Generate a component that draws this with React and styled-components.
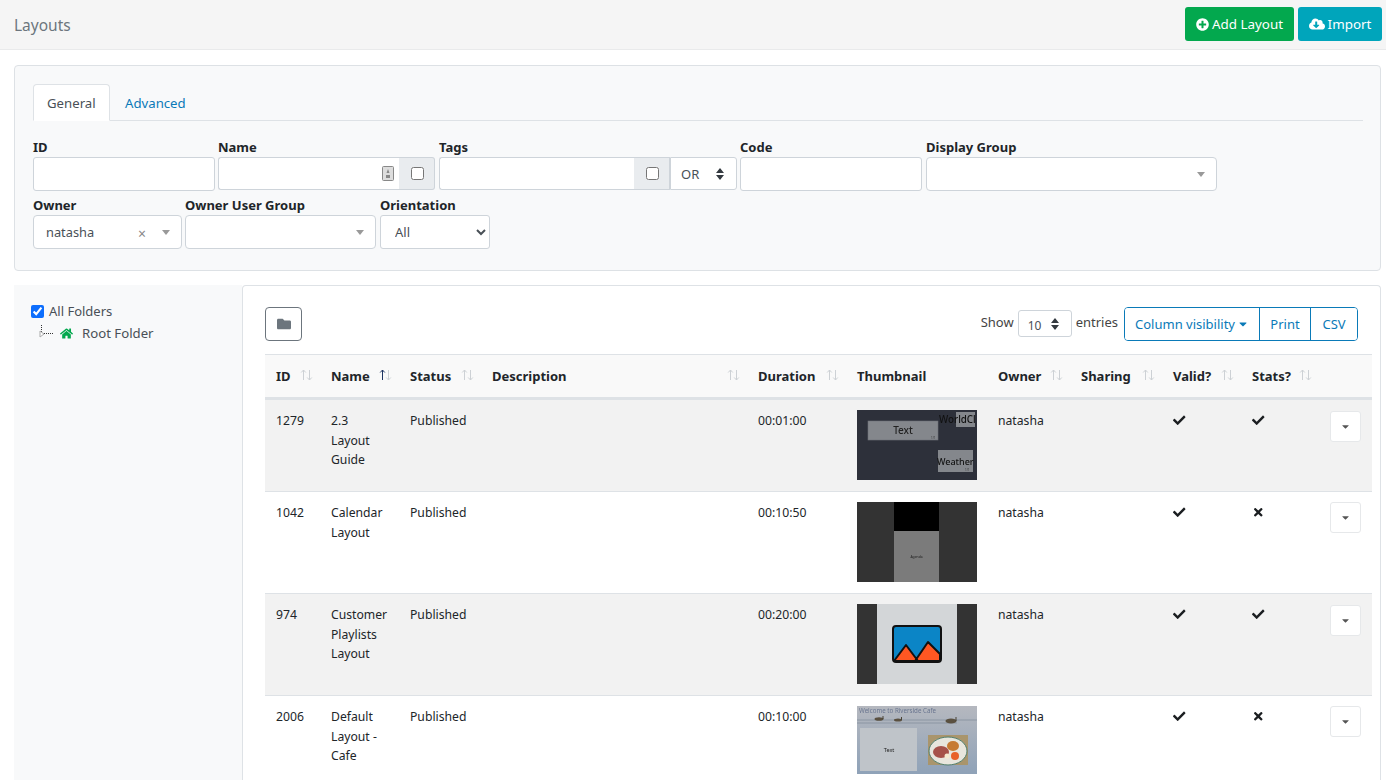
import React from "react";
import styled, { createGlobalStyle } from "styled-components";
import { FaPlusCircle, FaCloudDownloadAlt, FaFolder, FaHome, FaCheck, FaTimes, FaCaretDown } from "react-icons/fa";

const updown = "data:image/svg+xml,%3Csvg xmlns='http://www.w3.org/2000/svg' width='8' height='12' viewBox='0 0 8 12'%3E%3Cpath fill='%23343a40' d='M4 0 8 5H0zM4 12 0 7h8z'/%3E%3C/svg%3E";

const Global = createGlobalStyle`
	html, body {
		margin: 0;
		height: 780px;
		overflow: hidden;
		background: #fff;
		font-family: "Noto Sans", "Open Sans", sans-serif;
		font-size: 13px;
		color: #212529;
	}
	* { box-sizing: border-box; }
`;

const Header = styled.header`
	height: 50px;
	background: #f5f5f5;
	border-bottom: 1px solid #e9eaeb;
	display: flex;
	align-items: flex-start;
	justify-content: space-between;
	padding: 7px 4px 0 14px;
`;
const Title = styled.h1`
	margin: 7px 0 0;
	font-size: 15.5px;
	font-weight: 400;
	color: #6c757d;
	line-height: 22px;
`;
const HeaderActions = styled.div`
	display: flex;
	gap: 4px;
`;
const ActionButton = styled.button`
	height: 34px;
	width: ${(p) => p.$w}px;
	border: 0;
	border-radius: 3px;
	background: ${(p) => p.$color};
	color: #fff;
	font: inherit;
	font-size: 13.4px;
	display: flex;
	align-items: center;
	justify-content: center;
	gap: ${(p) => p.$gap}px;
	padding: 0;
	svg { font-size: ${(p) => p.$icon}px; }
`;

const FilterPanel = styled.section`
	margin: 15px 5px 0 14px;
	height: 206px;
	background: #f8f9fa;
	border: 1px solid #dde1e5;
	border-radius: 4px;
	padding: 18px 17px 0 18px;
`;
const Tabs = styled.nav`
	display: flex;
	height: 37px;
	border-bottom: 1px solid #dee2e6;
`;
const Tab = styled.a`
	height: 37px;
	padding: 0 ${(p) => p.$pad}px;
	width: ${(p) => p.$w}px;
	line-height: 36px;
	font-size: 13.2px;
	color: ${(p) => (p.$active ? "#495057" : "#0a7ab8")};
	background: ${(p) => (p.$active ? "#fff" : "transparent")};
	border: 1px solid ${(p) => (p.$active ? "#dee2e6" : "transparent")};
	border-bottom-color: ${(p) => (p.$active ? "#fff" : "transparent")};
	border-radius: 4px 4px 0 0;
	white-space: nowrap;
`;
const FieldRow = styled.div`
	display: flex;
	gap: 3px;
	margin-top: ${(p) => p.$top}px;
`;
const Field = styled.div`
	width: ${(p) => p.$w}px;
	margin-right: ${(p) => p.$after || 0}px;
	display: flex;
	flex-direction: column;
`;
const Label = styled.label`
	font-size: 13px;
	font-weight: 700;
	line-height: 18px;
	margin-bottom: 1px;
	color: #212529;
	white-space: nowrap;
`;
const InputGroup = styled.div`
	display: flex;
	height: 33px;
	position: relative;
`;
const TextInput = styled.input`
	flex: 1;
	min-width: 0;
	height: 33px;
	background: #fff;
	border: 1px solid #ced4da;
	border-radius: ${(p) => (p.$joined ? "3px 0 0 3px" : "3px")};
	${(p) => p.$joined && "border-right: 0;"}
`;
const Addon = styled.span`
	width: 36px;
	flex: none;
	background: #e9ecef;
	border: 1px solid #ced4da;
	border-left: 0;
	border-radius: ${(p) => (p.$square ? "0" : "0 3px 3px 0")};
	display: flex;
	align-items: center;
	justify-content: center;
	padding-left: 1px;
`;
const Check = styled.input.attrs({ type: "checkbox" })`
	width: 13px;
	height: 13px;
	margin: 0;
`;
const KeyBadge = styled.svg`
	position: absolute;
	left: 163px;
	top: 8px;
	width: 14px;
	height: 17px;
`;
const BootSelect = styled.select`
	appearance: none;
	font: inherit;
	color: #495057;
	background: #fff url("${updown}") no-repeat right 12px center;
	border: 1px solid #ced4da;
	border-radius: ${(p) => p.$radius || "3px"};
	width: ${(p) => p.$w}px;
	height: ${(p) => p.$h}px;
	padding: 0 0 0 ${(p) => p.$pad}px;
`;
const NativeSelect = styled.select`
	font: inherit;
	color: #495057;
	background: #fff;
	border: 1px solid #ced4da;
	border-radius: 3px;
	height: 34px;
	width: 110px;
	padding-left: 10px;
`;
const Select2 = styled.div`
	height: ${(p) => p.$h}px;
	background: #fff;
	border: 1px solid #ced4da;
	border-radius: 4px;
	display: flex;
	align-items: center;
	padding: 0 11px 0 12px;
	color: #495057;
	font-size: 12.8px;
`;
const Select2Text = styled.span`
	flex: 1;
`;
const ClearX = styled.span`
	color: #888;
	font-size: 14px;
	margin-right: 16px;
	margin-top: 2px;
`;
const Select2Caret = styled.i`
	width: 0;
	height: 0;
	border: 4px solid transparent;
	border-top: 5px solid #999;
	border-bottom: 0;
`;

const Body = styled.div`
	display: flex;
	margin: 14px 5px 0 14px;
	height: 500px;
`;
const Sidebar = styled.aside`
	width: 228px;
	background: #f8f9fa;
	padding: 16px 0 0 17px;
`;
const TreeRoot = styled.div`
	display: flex;
	align-items: center;
	gap: 5px;
	height: 20px;
	color: #495057;
	input { width: 13px; height: 13px; margin: 0; accent-color: #0d6efd; }
`;
const TreeChild = styled.div`
	display: flex;
	align-items: center;
	height: 24px;
	padding-left: 8px;
	color: #495057;
	font-size: 13.2px;
	svg.home { color: #03a84e; font-size: 13px; margin: 0 9px 0 5px; }
`;
const Content = styled.main`
	flex: 1;
	min-width: 0;
	background: #fff;
	border: 1px solid #dee2e6;
	border-bottom: 0;
	border-radius: 4px 4px 0 0;
	padding: 21px 8px 0 22px;
`;
const TableBar = styled.div`
	display: flex;
	align-items: flex-start;
	justify-content: space-between;
	padding-right: 14px;
	height: 47px;
`;
const FolderButton = styled.button`
	width: 37px;
	height: 34px;
	background: #fff;
	border: 1px solid #6c757d;
	border-radius: 4px;
	color: #6c757d;
	font-size: 14px;
	display: flex;
	align-items: center;
	justify-content: center;
	padding: 0;
`;
const Tools = styled.div`
	display: flex;
	align-items: flex-start;
`;
const LengthLabel = styled.div`
	display: flex;
	align-items: flex-start;
	gap: 4px;
	margin-right: 6px;
	line-height: 30px;
	color: #444;
	select { margin-top: 3px; font-size: 12px; }
`;
const ButtonGroup = styled.div`
	display: flex;
	height: 34px;
	border: 1px solid #0a7ab8;
	border-radius: 4px;
	overflow: hidden;
`;
const GroupButton = styled.button`
	background: #fff;
	border: 0;
	border-left: ${(p) => (p.$first ? "0" : "1px solid #0a7ab8")};
	font: inherit;
	color: #0a7ab8;
	padding: 0;
	width: ${(p) => p.$w}px;
	display: flex;
	align-items: center;
	justify-content: center;
	gap: 2px;
	svg { font-size: 12px; }
`;

const Table = styled.table`
	border-collapse: collapse;
	table-layout: fixed;
	width: 1107px;
`;
const Th = styled.th`
	height: 44px;
	background: #f9f9f9;
	border-top: 1px solid #dee2e6;
	border-bottom: 3px solid #dee2e6;
	padding: 0 0 0 11px;
	text-align: left;
	font-size: 13px;
	font-weight: 700;
	color: #212529;
	white-space: nowrap;
	position: relative;
`;
const SortArrows = styled.svg`
	position: absolute;
	right: 7px;
	top: 14px;
	width: 13px;
	height: 12px;
`;
const Tr = styled.tr`
	background: ${(p) => (p.$odd ? "#f2f2f2" : "#fff")};
	border-bottom: 1px solid #dee2e6;
`;
const Td = styled.td`
	padding: ${(p) => (p.$flush ? "10px 11px 11px" : "11px 11px 10px")};
	vertical-align: top;
	line-height: 19.5px;
	font-size: 12.2px;
	color: #212529;
`;
const Mark = styled.span`
	display: block;
	margin-top: 1px;
	font-size: 12.5px;
	line-height: 19.5px;
	color: #1b1e21;
	svg { display: inline-block; vertical-align: -1px; }
`;
const ThumbFrame = styled.svg`
	display: block;
	width: 120px;
	height: ${(p) => p.$h}px;
	filter: blur(0.35px);
`;
const RowMenu = styled.button`
	width: 31px;
	height: 31px;
	margin-top: ${(p) => (p.$odd ? 1 : 0)}px;
	background: #fff;
	border: 1px solid #e6e8ea;
	border-radius: 3px;
	display: flex;
	align-items: center;
	justify-content: center;
	padding: 0;
	svg { font-size: 11px; color: #555; }
`;

const columns = [
	{ name: "ID", w: 55, sort: true },
	{ name: "Name", w: 79, sort: true, asc: true },
	{ name: "Status", w: 82, sort: true },
	{ name: "Description", w: 266, sort: true },
	{ name: "Duration", w: 99, sort: true },
	{ name: "Thumbnail", w: 141 },
	{ name: "Owner", w: 83, sort: true },
	{ name: "Sharing", w: 92, sort: true },
	{ name: "Valid?", w: 79, sort: true },
	{ name: "Stats?", w: 78, sort: true },
	{ name: "", w: 53 },
];

const SortIcon = ({ asc }) => (
	<SortArrows viewBox="0 0 13 12" fill="none" strokeWidth="1">
		<path d="M3.5 11V1M1.2 3.5 3.5 1l2.3 2.5" stroke={asc ? "#1d3461" : "#cdd1d5"} />
		<path d="M9.5 1v10M7.2 8.5 9.5 11l2.3-2.5" stroke="#cdd1d5" />
	</SortArrows>
);

const GuideThumb = () => (
	<ThumbFrame $h={70} viewBox="0 0 120 70">
		<rect width="120" height="70" fill="#2d303a" />
		<rect x="11" y="11" width="70" height="19" fill="#84878c" stroke="#6f7278" strokeWidth=".6" />
		<rect x="99" y="2" width="19" height="15" fill="#84878c" />
		<rect x="81" y="40" width="35" height="22" fill="#84878c" />
		<text x="46" y="24" fontSize="10" fontWeight="500" textAnchor="middle" fill="#222" fontFamily="Noto Sans">Text</text>
		<text x="82" y="12.5" fontSize="9.8" fontWeight="500" fill="#111" fontFamily="Noto Sans">WorldCl</text>
		<text x="80" y="55" fontSize="9" fontWeight="500" fill="#111" fontFamily="Noto Sans">Weather</text>
		<text x="74" y="29" fontSize="3" fill="#333" fontFamily="Noto Sans">1/1</text>
		<text x="108" y="61" fontSize="3" fill="#333" fontFamily="Noto Sans">1/1</text>
	</ThumbFrame>
);

const CalendarThumb = () => (
	<ThumbFrame $h={80} viewBox="0 0 120 80">
		<rect width="120" height="80" fill="#333" />
		<rect x="37" width="45" height="29" fill="#000" />
		<rect x="37" y="29" width="45" height="51" fill="#7b7b7b" />
		<text x="59.5" y="56" fontSize="3.4" textAnchor="middle" fill="#222" fontFamily="Noto Sans">Agenda</text>
	</ThumbFrame>
);

const PlaylistThumb = () => (
	<ThumbFrame $h={80} viewBox="0 0 120 80">
		<rect width="120" height="80" fill="#333" />
		<rect x="20" width="80" height="80" fill="#d3d6d8" />
		<rect x="36" y="22" width="48" height="36" rx="3" fill="#0b85c6" stroke="#111" strokeWidth="2" />
		<path d="M37 57 49 41 61 57ZM58 57 71 38 83 50V57Z" fill="#ff5722" stroke="#111" strokeWidth="2" strokeLinejoin="round" />
	</ThumbFrame>
);

const CafeThumb = () => (
	<ThumbFrame $h={68} viewBox="0 0 120 68">
		<defs>
			<linearGradient id="cafeSky" x1="0" y1="0" x2="0" y2="1">
				<stop offset="0" stopColor="#b5b8bf" />
				<stop offset="1" stopColor="#8fa2b8" />
			</linearGradient>
		</defs>
		<rect width="120" height="68" fill="url(#cafeSky)" />
		<text x="2" y="6.5" fontSize="6.2" fill="#6a7690" fontFamily="Noto Sans">Welcome to Riverside Cafe</text>
		<path d="M0 14H120M0 17H100" stroke="#7f8a99" strokeWidth=".7" />
		<ellipse cx="22" cy="13" rx="4.5" ry="1.8" fill="#5a5040" />
		<ellipse cx="41" cy="14" rx="4" ry="1.5" fill="#5a5040" />
		<ellipse cx="94" cy="15" rx="5.5" ry="2.4" fill="#5a5040" />
		<path d="M26 13V10M44.5 14V11M99 15V11" stroke="#4a4436" strokeWidth="1" />
		<rect x="3" y="22" width="57" height="43" fill="#bfc4c9" />
		<text x="32" y="46" fontSize="5.5" textAnchor="middle" fill="#222" fontFamily="Noto Sans">Text</text>
		<rect x="71" y="29" width="40" height="30" fill="#a9956c" />
		<ellipse cx="91" cy="45" rx="19" ry="14" fill="#e8e6dd" stroke="#4f7f6f" />
		<ellipse cx="84" cy="46" rx="8" ry="6" fill="#a6524a" />
		<ellipse cx="96" cy="40" rx="6" ry="5" fill="#c67a32" />
		<circle cx="98" cy="50" r="4" fill="#e8622a" />
		<circle cx="90" cy="50" r="2.5" fill="#f4ead0" />
	</ThumbFrame>
);

const rows = [
	{ id: 1279, name: "2.3 Layout Guide", duration: "00:01:00", thumb: <GuideThumb />, stats: true },
	{ id: 1042, name: "Calendar Layout", duration: "00:10:50", thumb: <CalendarThumb />, stats: false },
	{ id: 974, name: "Customer Playlists Layout", duration: "00:20:00", thumb: <PlaylistThumb />, stats: true },
	{ id: 2006, name: "Default Layout - Cafe", duration: "00:10:00", thumb: <CafeThumb />, stats: false },
];

export default function App() {
	return (
		<>
			<Global />
			<Header>
				<Title>Layouts</Title>
				<HeaderActions>
					<ActionButton $color="#03a84e" $w={109} $gap={3} $icon={13}><FaPlusCircle />Add Layout</ActionButton>
					<ActionButton $color="#00a5bb" $w={84} $gap={3} $icon={16}><FaCloudDownloadAlt />Import</ActionButton>
				</HeaderActions>
			</Header>

			<FilterPanel>
				<Tabs>
					<Tab $active $w={77} $pad={13}>General</Tab>
					<Tab $w={90} $pad={14}>Advanced</Tab>
				</Tabs>
				<FieldRow $top={17}>
					<Field $w={182}>
						<Label>ID</Label>
						<TextInput />
					</Field>
					<Field $w={217} $after={1}>
						<Label>Name</Label>
						<InputGroup>
							<TextInput $joined />
							<KeyBadge viewBox="0 0 14 17">
								<rect x="1.5" y="1.5" width="11" height="14" rx="1" fill="#ddd" stroke="#888" />
								<path d="M7 4 5.5 8h3zM5 10h4v3H5z" fill="#888" />
							</KeyBadge>
							<Addon><Check /></Addon>
						</InputGroup>
					</Field>
					<Field $w={298}>
						<Label>Tags</Label>
						<InputGroup>
							<TextInput $joined />
							<Addon $square><Check /></Addon>
							<BootSelect $w={67} $h={33} $pad={10} $radius="0 3px 3px 0" defaultValue="OR">
								<option>OR</option>
							</BootSelect>
						</InputGroup>
					</Field>
					<Field $w={182} $after={1}>
						<Label>Code</Label>
						<TextInput />
					</Field>
					<Field $w={291}>
						<Label>Display Group</Label>
						<Select2 $h={34}>
							<Select2Text />
							<Select2Caret />
						</Select2>
					</Field>
				</FieldRow>
				<FieldRow $top={5}>
					<Field $w={149}>
						<Label>Owner</Label>
						<Select2 $h={34}>
							<Select2Text>natasha</Select2Text>
							<ClearX>×</ClearX>
							<Select2Caret />
						</Select2>
					</Field>
					<Field $w={191} $after={1}>
						<Label>Owner User Group</Label>
						<Select2 $h={34}>
							<Select2Text />
							<Select2Caret />
						</Select2>
					</Field>
					<Field $w={110}>
						<Label>Orientation</Label>
						<NativeSelect defaultValue="All">
							<option>All</option>
						</NativeSelect>
					</Field>
				</FieldRow>
			</FilterPanel>

			<Body>
				<Sidebar>
					<TreeRoot>
						<input type="checkbox" defaultChecked />
						All Folders
					</TreeRoot>
					<TreeChild>
						<svg width="16" height="16" viewBox="0 0 16 16">
							<path d="M2.5 0V7M3 8.5H15" stroke="#333" strokeDasharray="1 1" fill="none" />
							<path d="M1 6 5 9 1 12Z" fill="#fff" stroke="#aaa" />
						</svg>
						<FaHome className="home" />
						Root Folder
					</TreeChild>
				</Sidebar>
				<Content>
					<TableBar>
						<FolderButton><FaFolder /></FolderButton>
						<Tools>
							<LengthLabel>
								Show
								<BootSelect $w={54} $h={27} $pad={9} defaultValue="10">
									<option>10</option>
								</BootSelect>
								entries
							</LengthLabel>
							<ButtonGroup>
								<GroupButton $first $w={134}>Column visibility<FaCaretDown /></GroupButton>
								<GroupButton $w={51}>Print</GroupButton>
								<GroupButton $w={47}>CSV</GroupButton>
							</ButtonGroup>
						</Tools>
					</TableBar>
					<Table>
						<colgroup>
							{columns.map((c) => <col key={c.name} width={c.w} />)}
						</colgroup>
						<thead>
							<tr>
								{columns.map((c) => (
									<Th key={c.name}>
										{c.name}
										{c.sort && <SortIcon asc={c.asc} />}
									</Th>
								))}
							</tr>
						</thead>
						<tbody>
							{rows.map((r, i) => (
								<Tr key={r.id} $odd={i % 2 === 0}>
									<Td>{r.id}</Td>
									<Td>{r.name}</Td>
									<Td>Published</Td>
									<Td />
									<Td>{r.duration}</Td>
									<Td $flush>{r.thumb}</Td>
									<Td>natasha</Td>
									<Td />
									<Td $flush><Mark><FaCheck /></Mark></Td>
									<Td $flush><Mark>{r.stats ? <FaCheck /> : <FaTimes />}</Mark></Td>
									<Td $flush><RowMenu $odd={i % 2 === 0}><FaCaretDown /></RowMenu></Td>
								</Tr>
							))}
						</tbody>
					</Table>
				</Content>
			</Body>
		</>
	);
}
